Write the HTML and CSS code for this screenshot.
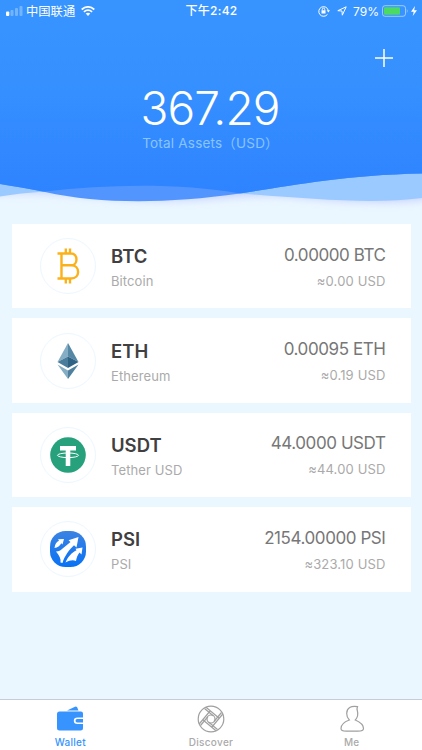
FILE: index.html
```html
<!DOCTYPE html>
<html lang="en">

<head>
    <meta charset="UTF-8">
    <meta name="viewport" content="width=device-width, initial-scale=1.0">
    <title>Wallet</title>
    <link rel="stylesheet" href="styles.css">
</head>

<body>

    <header>
        <svg class="wave" viewBox="0 0 422 224">
            <defs>
                <linearGradient id="sky" x1="0" y1="0" x2="0" y2="200" gradientUnits="userSpaceOnUse">
                    <stop offset="0" stop-color="#3794ff" />
                    <stop offset="0.4" stop-color="#3691ff" />
                    <stop offset="1" stop-color="#2e82ff" />
                </linearGradient>
                <filter id="shadow" x="-10%" y="-10%" width="120%" height="120%">
                    <feGaussianBlur stdDeviation="5" />
                </filter>
                <clipPath id="front">
                    <path d="M0 0H422V173.500C340 175 285 187 240 193.500C165 204 100 204 45 192Q20 187 0 184Z" />
                </clipPath>
            </defs>
            <path d="M-20 100H442V196C400 204 360 202 300 197C250 191 220 200 160 200C100 200 60 188 -20 194Z" fill="#9fa8ff" opacity="0.55" filter="url(#shadow)" />
            <path d="M0 0H422V198C370 205 305 198 240 193.500C180 183 110 184 45 191.500Q20 193 0 196.500Z" fill="#9acaff" />
            <path d="M0 0H422V173.500C340 175 285 187 240 193.500C165 204 100 204 45 192Q20 187 0 184Z" fill="#5295ff" />
            <path d="M0 0H422V198C370 205 305 198 240 193.500C180 183 110 184 45 191.500Q20 193 0 196.500Z" fill="url(#sky)" clip-path="url(#front)" />
        </svg>

        <div class="status">
            <div class="status-left">
                <svg width="17" height="10" viewBox="0 0 17 10" fill="#fff">
                    <rect x="0" y="5.500" width="3.300" height="4.500" rx="1" />
                    <g opacity="0.3">
                        <rect x="4.500" y="4" width="3" height="6" rx="1" />
                        <rect x="9" y="2" width="3" height="8" rx="1" />
                        <rect x="13.500" y="0" width="3" height="10" rx="1" />
                    </g>
                </svg>
                <span class="carrier">中国联通</span>
                <svg width="14" height="10" viewBox="0 0 14 10">
                    <g fill="none" stroke="#fff" stroke-width="1.700">
                        <path d="M0.700 3.500Q7 -1.800 13.300 3.500" />
                        <path d="M2.900 5.900Q7 2.500 11.100 5.900" />
                    </g>
                    <path d="M4.700 7.600Q7 5.800 9.300 7.600L7 10Z" fill="#fff" />
                </svg>
            </div>
            <span class="time">下午2:42</span>
            <div class="status-right">
                <svg width="12" height="12" viewBox="0 0 12 12" fill="none" stroke="#fff">
                    <path d="M9.500 9.300A4.800 4.800 0 1 1 10.300 5.500" />
                    <path d="M8.700 5.200H12L10.400 7.500Z" fill="#fff" stroke="none" />
                    <rect x="3.500" y="5.300" width="4" height="3.200" fill="#fff" stroke="none" />
                    <path d="M4.300 5.500V4.300A1.200 1.200 0 0 1 6.700 4.300V5.500" stroke-width="0.900" />
                </svg>
                <svg width="10" height="10" viewBox="0 0 10 10" fill="none" stroke="#fff" stroke-linejoin="round">
                    <path d="M0.800 4.700L9.200 0.800L5.300 9.200L5 5Z" />
                </svg>
                <span class="percent">79%</span>
                <svg width="26" height="12" viewBox="0 0 26 12">
                    <rect x="0.500" y="0.700" width="23" height="10.600" rx="2.500" fill="none" stroke="#fff" stroke-opacity="0.500" />
                    <rect x="2" y="2.200" width="16" height="7.600" rx="1" fill="#4cd964" />
                    <path d="M24.800 4Q26.500 6 24.800 8Z" fill="#fff" opacity="0.500" />
                </svg>
                <svg width="6" height="10" viewBox="0 0 6 10">
                    <path d="M4 0L0 5.700H2.700L1.700 10L6 4.200H3.200Z" fill="#fff" />
                </svg>
            </div>
        </div>

        <div class="toolbar">
            <svg width="18" height="18" viewBox="0 0 18 18" stroke="#fff" stroke-width="1.500">
                <path d="M9 0V18M0 9H18" />
            </svg>
        </div>

        <div class="total">367.29</div>
        <div class="total-label">Total Assets（USD）</div>
    </header>

    <main>
        <div class="card">
            <div class="coin">
                <svg width="24" height="36" viewBox="0 0 24 36" fill="none" stroke="#fbb21a" stroke-width="2.400">
                    <path d="M1.500 5.500H15C22.300 5.500 22.300 17.300 15 17.300H5.500M15 17.300C24.500 17.300 24.500 30.500 15 30.500H1.500M5.500 5.500V30.500M9.800 0.500V5.500M14 0.500V5.500M9.800 30.500V35.500M14 30.500V35.500" />
                </svg>
            </div>
            <div class="name">
                <b>BTC</b>
                <span>Bitcoin</span>
            </div>
            <div class="amount">
                <p>0.00000 BTC</p>
                <span><i>≈</i>0.00 USD</span>
            </div>
        </div>

        <div class="card">
            <div class="coin">
                <svg width="22" height="36" viewBox="0 0 22 36">
                    <path d="M11 0L0.500 19L11 13.500Z" fill="#85adc4" />
                    <path d="M11 0L21.500 19L11 13.500Z" fill="#5688a5" />
                    <path d="M0.500 19L11 13.500V25Z" fill="#4a7c9b" />
                    <path d="M21.500 19L11 13.500V25Z" fill="#2f6384" />
                    <path d="M0.500 21.500L11 27.500V36Z" fill="#85adc4" />
                    <path d="M21.500 21.500L11 27.500V36Z" fill="#4f819f" />
                </svg>
            </div>
            <div class="name">
                <b>ETH</b>
                <span>Ethereum</span>
            </div>
            <div class="amount">
                <p>0.00095 ETH</p>
                <span><i>≈</i>0.19 USD</span>
            </div>
        </div>

        <div class="card">
            <div class="coin">
                <svg width="36" height="36" viewBox="0 0 36 36">
                    <circle cx="18" cy="18" r="17.800" fill="#26a17b" />
                    <path d="M10 9H26V13.500H20.300V29H15.700V13.500H10Z" fill="#fff" />
                    <ellipse cx="18" cy="18.300" rx="10.500" ry="2.300" fill="none" stroke="#fff" stroke-width="1" />
                </svg>
            </div>
            <div class="name">
                <b>USDT</b>
                <span>Tether USD</span>
            </div>
            <div class="amount">
                <p>44.0000 USDT</p>
                <span><i>≈</i>44.00 USD</span>
            </div>
        </div>

        <div class="card">
            <div class="coin">
                <svg width="36" height="36" viewBox="0 0 36 36">
                    <defs>
                        <linearGradient id="psi" x1="0" y1="0" x2="0" y2="1">
                            <stop offset="0" stop-color="#3c83e2" />
                            <stop offset="1" stop-color="#0872f5" />
                        </linearGradient>
                    </defs>
                    <rect x="0" y="0" width="36" height="36" rx="15.500" fill="url(#psi)" />
                    <g fill="#fff">
                        <path d="M4.500 17C5 13 6.500 10.500 9 9.700L8 8.300L14 8L12.500 13.500L11.300 12.200C10 15 7.500 16.500 4.500 17Z" />
                        <path d="M6 20.500C9 20.500 10.500 19.500 12 18L20.500 11L18.500 9.300L28.500 6L26.500 16.500L24 14.300C19.500 18.500 14.500 25 12.500 32L10.500 31.500C11 28 9.500 24.500 6 20.500Z" />
                        <path d="M15.500 31.500C17.500 26.500 21.500 21.500 26.500 19.200L25.500 17.800L32.500 16.500L31.500 23.500L29.500 21.500C27.500 24 26.500 27 26 30C23 28.500 20 29 15.500 31.500Z" />
                    </g>
                </svg>
            </div>
            <div class="name">
                <b>PSI</b>
                <span>PSI</span>
            </div>
            <div class="amount">
                <p>2154.00000 PSI</p>
                <span><i>≈</i>323.10 USD</span>
            </div>
        </div>
    </main>

    <footer>
        <a class="active">
            <svg width="28" height="28" viewBox="0 0 28 28">
                <path d="M11 5.500L19 1.700Q20.500 1.200 21.200 2.500L22.500 5.500Z" fill="#3794ff" />
                <path d="M3.500 6.500H25Q27 6.500 27 8.500V12.500H21.500Q17.800 12.500 17.800 15.700T21.500 18.900H27V23Q27 25.500 24.500 25.500H3.500Q1 25.500 1 23V9Q1 6.500 3.500 6.500Z" fill="#3794ff" />
                <path d="M21.200 14H27V17.400H21.200A1.700 1.700 0 0 1 21.200 14Z" fill="#3794ff" />
            </svg>
            <span>Wallet</span>
        </a>
        <a>
            <svg width="28" height="28" viewBox="0 0 28 28" fill="none" stroke="#a0a0a0" stroke-width="1.200">
                <circle cx="14" cy="14" r="12.800" />
                <circle cx="14" cy="14" r="4" />
                <path d="M9 2.200L22.500 13.500M7.500 3.500L16.500 11M25.800 9L14.500 22.500M24.500 7.500L17 16.500M19 25.800L5.500 14.500M20.500 24.500L11.500 17M2.200 19L13.500 5.500M3.500 20.500L11 11.500" />
            </svg>
            <span>Discover</span>
        </a>
        <a>
            <svg width="28" height="28" viewBox="0 0 28 28" fill="none" stroke="#a0a0a0" stroke-width="1.200">
                <path d="M19.500 1.700C13 0.500 8.700 3 8.700 8.500C8.700 11.500 9.800 13.500 11.300 15C6 17 3 20 3 23.500Q3 26.200 8 26.200H20Q25.500 26.200 25.500 23.500C25.500 20 22 17 17.300 15C19.500 12.500 20.300 9 19.300 5.500Q18.700 3.500 19.500 1.700Z" />
            </svg>
            <span>Me</span>
        </a>
    </footer>

</body>

</html>
```
FILE: styles.css
```css
* {
    box-sizing: border-box;
}

body {
    font-family: Inter, "Noto Sans CJK SC", sans-serif;
    margin: 0;
    height: 750px;
    display: flex;
    flex-direction: column;
    background-color: #ebf7ff;
    overflow: hidden;
}

header {
    position: relative;
    height: 224px;
    color: white;
    text-align: center;
}

.wave {
    position: absolute;
    top: 0;
    left: 0;
    width: 422px;
    height: 224px;
    z-index: -1;
}

.status {
    display: grid;
    grid-template-columns: 1fr auto 1fr;
    align-items: center;
    height: 22px;
    padding: 0 5px 0 6px;
    font-size: 12px;
}

.status-left,
.status-right {
    display: flex;
    align-items: center;
}

.status-right {
    justify-content: flex-end;
}

.carrier {
    margin: 0 6px 0 3px;
    font-size: 12.3px;
}

.time {
    font-weight: 500;
    line-height: 18px;
    letter-spacing: 0.3px;
}

.percent {
    margin: 0 3px 0 6px;
    font-size: 12px;
}

.status-right svg:first-child {
    margin-right: 7px;
}

.status-right svg:last-child {
    margin-left: 3px;
}

.toolbar {
    display: flex;
    justify-content: flex-end;
    padding: 27px 29px 0 0;
}

.total {
    margin-top: 16px;
    padding-right: 2px;
    font-size: 46px;
    font-weight: 300;
    line-height: 50px;
    letter-spacing: -0.9px;
}

.total-label {
    padding-right: 1px;
    font-size: 13.5px;
    line-height: 20px;
    letter-spacing: 0.2px;
    color: #8ac4ff;
}

main {
    flex: 1;
    display: flex;
    flex-direction: column;
    gap: 10px;
    padding: 0 11.5px;
}

.card {
    display: flex;
    align-items: center;
    height: 84.4px;
    padding: 0 25.5px 0 28.5px;
    background-color: white;
}

.coin {
    width: 56px;
    height: 56px;
    display: flex;
    align-items: center;
    justify-content: center;
    border: 1px solid #ebf7ff;
    border-radius: 50%;
}

.name,
.amount {
    display: flex;
    flex-direction: column;
}

.name {
    flex: 1;
    margin-left: 15px;
}

.name b {
    font-size: 18.5px;
    font-weight: 600;
    line-height: 26px;
    color: #404040;
}

.name span,
.amount span {
    font-size: 13px;
    line-height: 16px;
    color: #aaa;
}

.name span {
    margin-top: 4px;
    letter-spacing: 0.1px;
}

.amount {
    align-items: flex-end;
    margin-right: -0.5px;
}

.amount p {
    margin: 0;
    font-size: 17px;
    line-height: 22px;
    letter-spacing: -0.42px;
    color: #777;
}

.amount span {
    margin-top: 7px;
    letter-spacing: 0.15px;
}

.amount i {
    font-size: 13px;
    font-style: normal;
}

footer {
    display: flex;
    justify-content: space-around;
    height: 51px;
    background-color: white;
    border-top: 1px solid #c5ced6;
}

footer a {
    flex: 1;
    display: flex;
    flex-direction: column;
    align-items: center;
    padding-top: 5px;
    color: #aaa;
    font-size: 10px;
    font-weight: 500;
    letter-spacing: 0.3px;
}

footer span {
    line-height: 14px;
    margin-top: 2px;
}

footer .active {
    color: #3794ff;
}
```
